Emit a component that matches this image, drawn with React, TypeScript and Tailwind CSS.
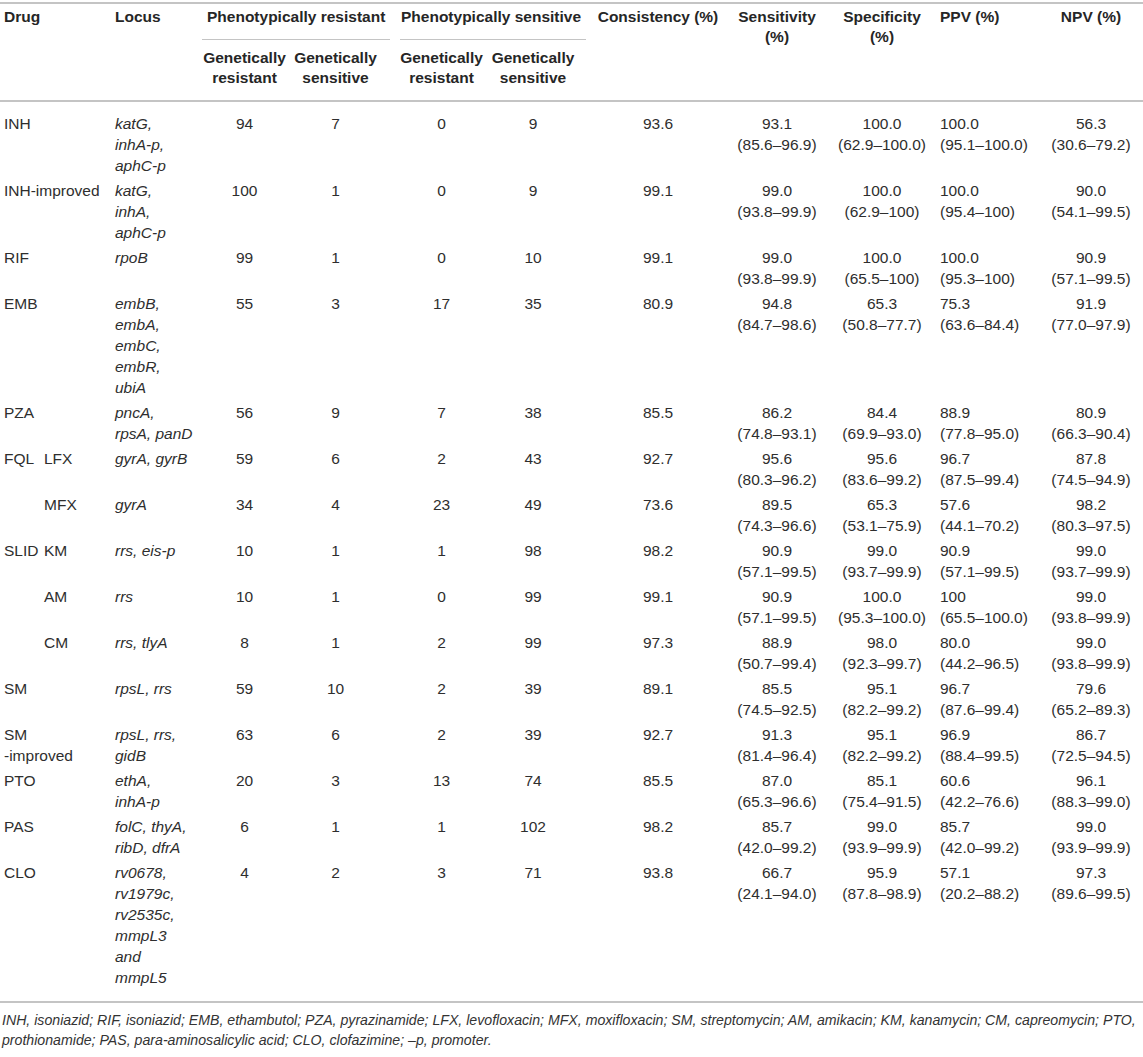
import React from "react";

const G =
  "grid grid-cols-[112px_87px_91px_91px_15px_91px_92px_12px_134px_104px_106px_104px_104px]";

type Row = {
  d: React.ReactNode;
  l: string[];
  n: [string, string, string, string];
  c: string;
  s: [string, string];
  sp: [string, string];
  p: [string, string];
  np: [string, string];
};

const sub = (g: string, s: string) => (
  <div className="flex">
    <span className="w-[40px]">{g}</span>
    <span>{s}</span>
  </div>
);

const rows: Row[] = [
  { d: "INH", l: ["katG,", "inhA-p,", "aphC-p"], n: ["94", "7", "0", "9"], c: "93.6", s: ["93.1", "(85.6–96.9)"], sp: ["100.0", "(62.9–100.0)"], p: ["100.0", "(95.1–100.0)"], np: ["56.3", "(30.6–79.2)"] },
  { d: "INH-improved", l: ["katG,", "inhA,", "aphC-p"], n: ["100", "1", "0", "9"], c: "99.1", s: ["99.0", "(93.8–99.9)"], sp: ["100.0", "(62.9–100)"], p: ["100.0", "(95.4–100)"], np: ["90.0", "(54.1–99.5)"] },
  { d: "RIF", l: ["rpoB"], n: ["99", "1", "0", "10"], c: "99.1", s: ["99.0", "(93.8–99.9)"], sp: ["100.0", "(65.5–100)"], p: ["100.0", "(95.3–100)"], np: ["90.9", "(57.1–99.5)"] },
  { d: "EMB", l: ["embB,", "embA,", "embC,", "embR,", "ubiA"], n: ["55", "3", "17", "35"], c: "80.9", s: ["94.8", "(84.7–98.6)"], sp: ["65.3", "(50.8–77.7)"], p: ["75.3", "(63.6–84.4)"], np: ["91.9", "(77.0–97.9)"] },
  { d: "PZA", l: ["pncA,", "rpsA, panD"], n: ["56", "9", "7", "38"], c: "85.5", s: ["86.2", "(74.8–93.1)"], sp: ["84.4", "(69.9–93.0)"], p: ["88.9", "(77.8–95.0)"], np: ["80.9", "(66.3–90.4)"] },
  { d: sub("FQL", "LFX"), l: ["gyrA, gyrB"], n: ["59", "6", "2", "43"], c: "92.7", s: ["95.6", "(80.3–96.2)"], sp: ["95.6", "(83.6–99.2)"], p: ["96.7", "(87.5–99.4)"], np: ["87.8", "(74.5–94.9)"] },
  { d: sub("", "MFX"), l: ["gyrA"], n: ["34", "4", "23", "49"], c: "73.6", s: ["89.5", "(74.3–96.6)"], sp: ["65.3", "(53.1–75.9)"], p: ["57.6", "(44.1–70.2)"], np: ["98.2", "(80.3–97.5)"] },
  { d: sub("SLID", "KM"), l: ["rrs, eis-p"], n: ["10", "1", "1", "98"], c: "98.2", s: ["90.9", "(57.1–99.5)"], sp: ["99.0", "(93.7–99.9)"], p: ["90.9", "(57.1–99.5)"], np: ["99.0", "(93.7–99.9)"] },
  { d: sub("", "AM"), l: ["rrs"], n: ["10", "1", "0", "99"], c: "99.1", s: ["90.9", "(57.1–99.5)"], sp: ["100.0", "(95.3–100.0)"], p: ["100", "(65.5–100.0)"], np: ["99.0", "(93.8–99.9)"] },
  { d: sub("", "CM"), l: ["rrs, tlyA"], n: ["8", "1", "2", "99"], c: "97.3", s: ["88.9", "(50.7–99.4)"], sp: ["98.0", "(92.3–99.7)"], p: ["80.0", "(44.2–96.5)"], np: ["99.0", "(93.8–99.9)"] },
  { d: "SM", l: ["rpsL, rrs"], n: ["59", "10", "2", "39"], c: "89.1", s: ["85.5", "(74.5–92.5)"], sp: ["95.1", "(82.2–99.2)"], p: ["96.7", "(87.6–99.4)"], np: ["79.6", "(65.2–89.3)"] },
  { d: (<><div>SM</div><div>-improved</div></>), l: ["rpsL, rrs,", "gidB"], n: ["63", "6", "2", "39"], c: "92.7", s: ["91.3", "(81.4–96.4)"], sp: ["95.1", "(82.2–99.2)"], p: ["96.9", "(88.4–99.5)"], np: ["86.7", "(72.5–94.5)"] },
  { d: "PTO", l: ["ethA,", "inhA-p"], n: ["20", "3", "13", "74"], c: "85.5", s: ["87.0", "(65.3–96.6)"], sp: ["85.1", "(75.4–91.5)"], p: ["60.6", "(42.2–76.6)"], np: ["96.1", "(88.3–99.0)"] },
  { d: "PAS", l: ["folC, thyA,", "ribD, dfrA"], n: ["6", "1", "1", "102"], c: "98.2", s: ["85.7", "(42.0–99.2)"], sp: ["99.0", "(93.9–99.9)"], p: ["85.7", "(42.0–99.2)"], np: ["99.0", "(93.9–99.9)"] },
  { d: "CLO", l: ["rv0678,", "rv1979c,", "rv2535c,", "mmpL3", "and", "mmpL5"], n: ["4", "2", "3", "71"], c: "93.8", s: ["66.7", "(24.1–94.0)"], sp: ["95.9", "(87.8–98.9)"], p: ["57.1", "(20.2–88.2)"], np: ["97.3", "(89.6–99.5)"] },
];

function Two({ v }: { v: [string, string] }) {
  return (
    <>
      <div>{v[0]}</div>
      <div>{v[1]}</div>
    </>
  );
}

function DataRow({ r, last }: { r: Row; last?: boolean }) {
  return (
    <div className={`${G} pt-[2px] ${last ? "pb-[13px]" : "pb-[2px]"}`}>
      <div className="pl-[4px] whitespace-nowrap">{r.d}</div>
      <div className="pl-[3px] italic whitespace-nowrap">
        {r.l.map((x, i) => (
          <div key={i}>{x}</div>
        ))}
      </div>
      <div className="text-center">{r.n[0]}</div>
      <div className="text-center">{r.n[1]}</div>
      <div />
      <div className="text-center">{r.n[2]}</div>
      <div className="text-center">{r.n[3]}</div>
      <div />
      <div className="text-center">{r.c}</div>
      <div className="text-center whitespace-nowrap">
        <Two v={r.s} />
      </div>
      <div className="text-center whitespace-nowrap">
        <Two v={r.sp} />
      </div>
      <div className="pl-[5px] whitespace-nowrap">
        <Two v={r.p} />
      </div>
      <div className="text-center whitespace-nowrap">
        <Two v={r.np} />
      </div>
    </div>
  );
}

const Gen = ({ b }: { b: string }) => (
  <div className="pt-[8px] pb-[12px] text-center">
    <div>Genetically</div>
    <div>{b}</div>
  </div>
);

export default function App() {
  return (
    <div className="w-[1143px] min-h-[1057px] bg-white font-['Liberation_Sans',Arial,sans-serif] text-[#2e2e2e]">
      <div className="pt-[2px]">
        <div className="border-t-2 border-[#c4c4c4]" />
        {/* header */}
        <div className={`${G} grid-rows-[auto_auto] text-[15.5px] leading-[20px] font-bold text-[#262626]`}>
          <div className="row-span-2 pl-[4px] pt-[3px]">Drug</div>
          <div className="row-span-2 pl-[3px] pt-[3px]">Locus</div>
          <div className="col-span-3 pt-[3px]">
            <div className="pl-[8px] whitespace-nowrap">Phenotypically resistant</div>
            <div className="mt-[12px] ml-[3px] mr-[6px] border-b-[1.5px] border-[#c4c4c4]" />
          </div>
          <div className="col-span-3 pt-[3px]">
            <div className="pl-[5px] whitespace-nowrap">Phenotypically sensitive</div>
            <div className="mt-[12px] ml-[4px] mr-[5px] border-b-[1.5px] border-[#c4c4c4]" />
          </div>
          <div className="row-span-2 pt-[3px] text-center whitespace-nowrap">Consistency (%)</div>
          <div className="row-span-2 pt-[3px] text-center">
            <div>Sensitivity</div>
            <div>(%)</div>
          </div>
          <div className="row-span-2 pt-[3px] text-center">
            <div>Specificity</div>
            <div>(%)</div>
          </div>
          <div className="row-span-2 pt-[3px] pl-[5px] whitespace-nowrap">PPV (%)</div>
          <div className="row-span-2 pt-[3px] text-center whitespace-nowrap">NPV (%)</div>
          <div className="col-start-3">
            <Gen b="resistant" />
          </div>
          <div>
            <Gen b="sensitive" />
          </div>
          <div />
          <div>
            <Gen b="resistant" />
          </div>
          <div>
            <Gen b="sensitive" />
          </div>
          <div />
        </div>
        <div className="border-t-2 border-[#c4c4c4]" />
        {/* body */}
        <div className="pt-[9px] text-[15.5px] leading-[21px]">
          {rows.map((r, i) => (
            <DataRow key={i} r={r} last={i === rows.length - 1} />
          ))}
        </div>
        <div className="border-t-2 border-[#c4c4c4]" />
        <div className="pt-[7px] pl-[2px] text-[14.15px] leading-[20px] italic text-[#333] whitespace-nowrap">
          <div>
            INH, isoniazid; RIF, isoniazid; EMB, ethambutol; PZA, pyrazinamide; LFX, levofloxacin; MFX, moxifloxacin; SM, streptomycin; AM, amikacin; KM, kanamycin; CM, capreomycin; PTO,
          </div>
          <div>prothionamide; PAS, para-aminosalicylic acid; CLO, clofazimine; –p, promoter.</div>
        </div>
      </div>
    </div>
  );
}
